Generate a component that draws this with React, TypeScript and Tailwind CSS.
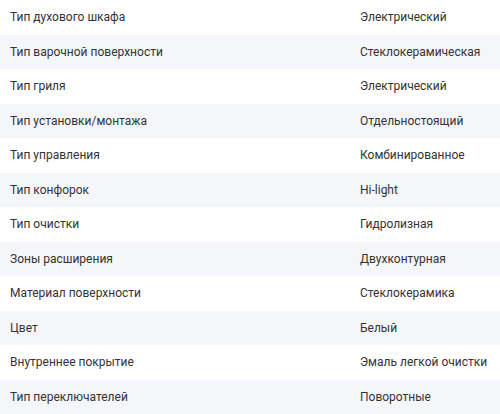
const specs = [
  ["Тип духового шкафа", "Электрический"],
  ["Тип варочной поверхности", "Стеклокерамическая"],
  ["Тип гриля", "Электрический"],
  ["Тип установки/монтажа", "Отдельностоящий"],
  ["Тип управления", "Комбинированное"],
  ["Тип конфорок", "Hi-light"],
  ["Тип очистки", "Гидролизная"],
  ["Зоны расширения", "Двухконтурная"],
  ["Материал поверхности", "Стеклокерамика"],
  ["Цвет", "Белый"],
  ["Внутреннее покрытие", "Эмаль легкой очистки"],
  ["Тип переключателей", "Поворотные"],
];

export default function App() {
  return (
    <div className="w-[500px] bg-white font-['Roboto',sans-serif] text-[12px] text-[#333]">
      {specs.map(([label, value], i) => (
        <div
          key={label}
          className={`flex h-[34.5px] items-center whitespace-nowrap ${i % 2 === 1 ? "bg-[#f5f6fa]" : "bg-white"}`}
        >
          <div className="w-[360px] pl-[10px]">{label}</div>
          <div className="flex-1">{value}</div>
        </div>
      ))}
    </div>
  );
}
